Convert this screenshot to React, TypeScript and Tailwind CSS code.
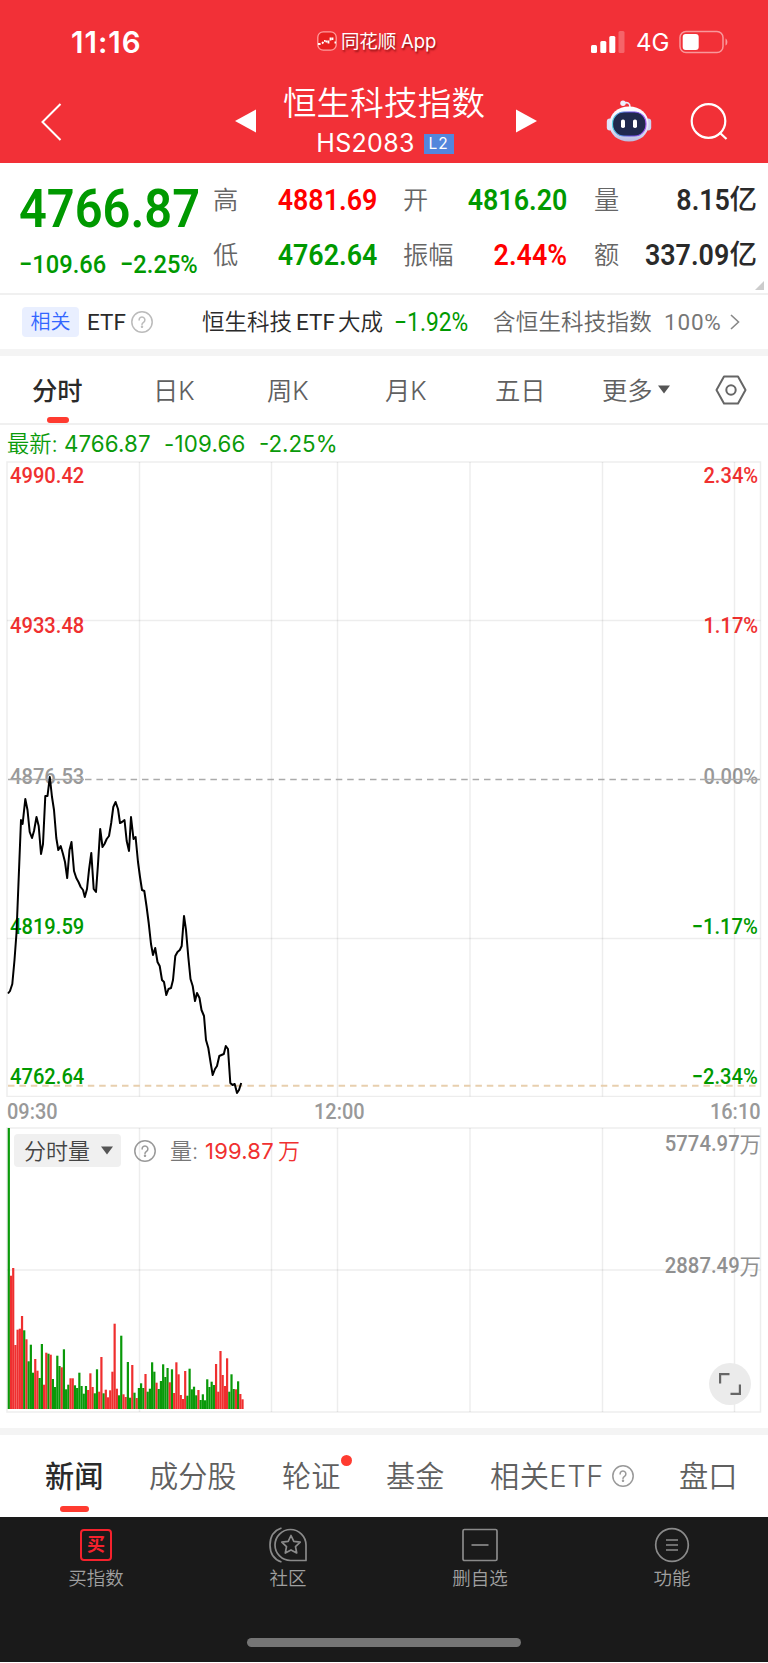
import React from "react";

const CN = "font-['Inter','Noto_Sans_CJK_SC',sans-serif]";
const NUM = "font-['Roboto','Noto_Sans_CJK_SC',sans-serif]";
const NARROW = "inline-block origin-left scale-x-[0.895] font-['Roboto','Noto_Sans_CJK_SC',sans-serif]";
const NARROW_R = "inline-block origin-right scale-x-[0.895] font-['Roboto','Noto_Sans_CJK_SC',sans-serif]";

const PRICE_POINTS =
  "8,993.5 10,991 12.3,984 14.5,960 16.5,933 21,820 22.6,824 25.3,799 27.5,810 29.7,832 32,838 34,831 36.5,817 38.7,826 41,854 43,844 45.3,796 47.5,796 49.8,777 52,797 54,810 56.3,838 58.3,850 60.7,846 63,854 65,862 67.2,878 69.5,850 71.5,842 74,871 76.3,878 78.5,882 80.7,887 83,890 84.8,897 87,889 89,870 91.3,853 93.7,889 96,892 98,864 100.2,829 102.5,847 104.5,844 106.7,839 109,836 111.2,823 113.3,807 115.6,802 118,809 120,823 122,822 124.5,820 126.7,841 129,851 131,817 133.5,839 135.6,837 138,862 140,877 142,890 144.3,891 146.5,906 148.7,923 151,944 153,955 155.2,948 157.5,962 159.7,966 162,980 164,982 166.3,995 168.5,989 171,988 173,980 175.3,956 177.5,952 179.8,950 181.7,946 184,916 186,930 188.3,957 190.5,979 192.7,986 195,1001 197,993 199.5,998 201.5,1010 204,1016 206,1040 208.3,1048 210.5,1062 212.7,1075 215,1069 217,1066 219.3,1056 221.5,1055 223.8,1054 225.8,1046 228,1049 230.3,1083 232.5,1085 234.7,1084 237,1093 239,1090 241.2,1083";

// Each entry is the bar's height, with a sign for its direction (positive: up, negative: down).
const VOLUME = [
  -281, 133.3, 141, 64, 79.3, 80.3, 93, -78.7, 69.7, -47.7, -64.3, -36.3, 50, 38.3, -31, -65, 24.3, 56.3, -55.3, 54.3, -30,
  -22, -53.3, -43, 41.7, -59.7, -19.7, -24.3, 30.7, 30.7, -23.7, -21, -36.3, -23, -15.3, -23, 19, 35.7, 22, -15.7, -39.7,
  17.3, 52, -15.7, 19.3, 11.7, 18.7, 37.3, 85.3, 20.3, -13.7, -73.3, 14.7, 12, -47, -11.3, 44, -16.3, 11, -21, -25.7, -21,
  35, -17.3, -20.3, -46.7, -37.3, 26.3, -20, -28, -44.7, -32, -41, 26.7, -39.7, 16, 46.7, 34.7, 14, 10, 38, -13.3, -40.3,
  -19.7, -22.3, -13.7, 19, -9, -14.7, -8.7, -29.7, -22, -27.3, -24, 45, 17.3, 58, 34, 23, 50.7, -17.3, -34.7, -20, 19.7,
  -27.7, 15, 9.7,
];

const GRID_X = [139.5, 271.5, 337.5, 470, 602.5, 734.5];

function HelpIcon({ className }: { className: string }) {
  return (
    <svg viewBox="0 0 22 22" className={className} fill="none" stroke="currentColor" strokeWidth="1.5">
      <circle cx="11" cy="11" r="10.2" />
      <path d="M8.1 8.9a2.9 2.9 0 1 1 4.5 2.4c-1 .7-1.6 1.1-1.6 2.2" strokeLinecap="round" />
      <circle cx="11" cy="15.8" r=".5" fill="currentColor" />
    </svg>
  );
}

function StatusBar() {
  return (
    <div className="flex h-[84px] items-center text-white">
      <div className="ml-[71px] w-[246px] pt-[2px] text-[29.5px] font-semibold leading-none tracking-[1px]">11:16</div>
      <svg viewBox="0 0 20 20" className="-mt-[3px] h-5 w-5 shrink-0" fill="none">
        <rect x=".8" y=".8" width="18.4" height="18.4" rx="5.5" fill="#e81f1f" stroke="#ff9d9d" strokeWidth="1.3" />
        <path d="M1 13h2.6M5 12.500l1.500-1.500M7 9.800h1.500M9.500 11.500v-2M11.500 12.500V9.500M13.500 9.500V6.500M15.500 9V6.500M17.500 11.500h1.500" stroke="#fff" strokeWidth="1.8" />
      </svg>
      <div className="-mt-[1px] ml-[4px] w-[250px] whitespace-nowrap text-[18.5px] leading-none tracking-[-0.15px] [text-shadow:1px_2px_2px_rgba(90,0,0,0.65)]">
        同花顺 App
      </div>
      <svg viewBox="0 0 34 22" className="h-[22px] w-[34px] shrink-0" fill="#fff">
        <rect x="0" y="14" width="6" height="8" rx="1.5" />
        <rect x="9.300" y="10" width="6" height="12" rx="1.500" />
        <rect x="18.300" y="5" width="6" height="17" rx="1.500" />
        <rect x="27.500" y="0" width="6" height="22" rx="1.500" opacity=".25" />
      </svg>
      <div className="ml-[11px] w-[43px] pt-[2px] text-[24px] leading-none">4G</div>
      <svg viewBox="0 0 50 24" className="h-6 w-[50px] shrink-0" fill="none">
        <rect x="1" y="1.500" width="43" height="21" rx="6" stroke="#fff" strokeOpacity=".5" strokeWidth="1.500" />
        <rect x="3.700" y="4" width="16" height="16" rx="3" fill="#fff" />
        <path d="M46.500 8.500c2.500 1 2.500 6 0 7z" fill="#fff" opacity=".5" />
      </svg>
    </div>
  );
}

function Robot() {
  return (
    <svg viewBox="0 0 46 42" className="h-[42px] w-[46px] shrink-0">
      <defs>
        <linearGradient id="shell" x1="0" y1="0" x2="0" y2="1">
          <stop offset="0" stopColor="#fff" />
          <stop offset=".6" stopColor="#e6e8fb" />
          <stop offset="1" stopColor="#b9bcdf" />
        </linearGradient>
        <linearGradient id="visor" x1="0" y1="0" x2="1" y2="0">
          <stop offset="0" stopColor="#5bd5e6" />
          <stop offset=".5" stopColor="#5a49e0" />
          <stop offset="1" stopColor="#a45cf0" />
        </linearGradient>
      </defs>
      <path d="M17 3c5-1 7 0 7 4" fill="none" stroke="#e9ebfb" strokeWidth="1.600" />
      <circle cx="17" cy="3.200" r="2.700" fill="#eef0fd" />
      <rect x="0.800" y="18.500" width="6" height="12" rx="3" fill="#dfe2f8" />
      <rect x="39.200" y="18.500" width="6" height="12" rx="3" fill="#cfd3f0" />
      <path d="M23 6.500C34 6.500 42.500 13 42.500 24S34 41.500 23 41.500 3.500 35 3.500 24 12 6.500 23 6.500z" fill="url(#shell)" />
      <rect x="6.500" y="12" width="33.500" height="24" rx="11.500" fill="#20294d" stroke="url(#visor)" strokeWidth="1.200" />
      <rect x="15" y="19.500" width="4" height="8.500" rx="1.800" fill="#fff" />
      <rect x="27" y="19.500" width="4" height="8.500" rx="1.800" fill="#fff" />
    </svg>
  );
}

function TitleBar() {
  return (
    <div className="flex h-[79px] text-white">
      <svg viewBox="0 0 22 38" className="ml-[41px] mt-[19px] h-[38px] w-[22px] shrink-0" fill="none" stroke="#fff" strokeWidth="2">
        <path d="M19.500 1 1.500 19l18 18" />
      </svg>
      <svg viewBox="0 0 21 24" className="ml-[172px] mt-[25px] h-6 w-[21px] shrink-0" fill="#fff">
        <path d="M0 12 21 .5v23z" />
      </svg>
      <div className="ml-[26px] flex w-[204px] shrink-0 flex-col items-center">
        <div className="whitespace-nowrap text-[33.5px] font-[350] leading-[38px] tracking-[0.2px]">恒生科技指数</div>
        <div className="mt-[8px] flex h-[27px] items-center pl-[2px]">
          <span className="text-[25px] leading-none tracking-[0.3px]">HS2083</span>
          <span className="ml-[9px] flex h-[20px] w-[30px] items-center justify-center bg-[#5386dc] text-[15.5px] leading-none tracking-[1px]">
            L2
          </span>
        </div>
      </div>
      <svg viewBox="0 0 21 24" className="ml-[30px] mt-[25px] h-6 w-[21px] shrink-0" fill="#fff">
        <path d="M21 12 0 .5v23z" />
      </svg>
      <div className="ml-[69px] mt-[16px]">
        <Robot />
      </div>
      <svg viewBox="0 0 38 38" className="ml-[38px] mt-[18px] h-[38px] w-[38px] shrink-0" fill="none" stroke="#fff" strokeWidth="2.200">
        <circle cx="18.500" cy="19" r="16.800" />
        <path d="m29.500 30.500 7 6.500" />
      </svg>
    </div>
  );
}

function Quote() {
  const label = "whitespace-nowrap pt-px text-[25.2px] font-[350] leading-none text-[#666]";
  const cell = "-mt-[2px] flex items-center justify-end whitespace-nowrap text-[30px] font-semibold leading-none";
  const unit = "text-[27.5px] font-medium leading-none";
  return (
    <div className="relative flex h-[130px]">
      <div className="ml-[19px] flex w-[194px] shrink-0 flex-col text-[#009900]">
        <div className="mt-[17px] h-[55px] w-[180px] whitespace-nowrap text-[54.5px] font-semibold leading-[55px]">
          <span className={NARROW}>4766.87</span>
        </div>
        <div className="mt-[14px] flex whitespace-nowrap text-[26.5px] font-medium leading-[28px]">
          <span className="w-[101px]">
            <span className={NARROW}>−109.66</span>
          </span>
          <span className="w-[80px]">
            <span className={NARROW}>−2.25%</span>
          </span>
        </div>
      </div>
      <div className="grid h-[110px] grid-cols-[60px_104px_26px_60px_104px_27px_35px_128px] grid-rows-[55px_55px] items-center pt-[10px]">
        <span className={label}>高</span>
        <span className={`${cell} text-[#f00]`}>
          <span className={NARROW_R}>4881.69</span>
        </span>
        <span />
        <span className={label}>开</span>
        <span className={`${cell} text-[#009900]`}>
          <span className={NARROW_R}>4816.20</span>
        </span>
        <span />
        <span className={label}>量</span>
        <span className={`${cell} text-[#2a2a2a]`}>
          <span className={NARROW_R}>8.15</span>
          <span className={unit}>亿</span>
        </span>
        <span className={label}>低</span>
        <span className={`${cell} text-[#009900]`}>
          <span className={NARROW_R}>4762.64</span>
        </span>
        <span />
        <span className={label}>振幅</span>
        <span className={`${cell} text-[#f00]`}>
          <span className={NARROW_R}>2.44%</span>
        </span>
        <span />
        <span className={label}>额</span>
        <span className={`${cell} text-[#2a2a2a]`}>
          <span className={NARROW_R}>337.09</span>
          <span className={unit}>亿</span>
        </span>
      </div>
      <svg viewBox="0 0 9 9" className="absolute bottom-[3px] right-1 h-[9px] w-[9px]" fill="#ccc">
        <path d="M9 0v9H0z" />
      </svg>
    </div>
  );
}

function EtfRow() {
  return (
    <div className="flex h-[56px] items-center whitespace-nowrap border-t-2 border-[#f0f0f0] text-[22.5px] leading-none text-[#2a2a2a]">
      <span className="ml-[22px] flex h-[30px] w-[57px] shrink-0 items-center justify-center rounded-[4px] bg-[#e9efff] text-[20px] font-[350] text-[#3366ff]">
        相关
      </span>
      <span className={`ml-[8px] w-[44px] ${NUM}`}>ETF</span>
      <HelpIcon className="h-[22px] w-[22px] shrink-0 text-[#bbb]" />
      <span className={`ml-[49px] flex w-[192px] items-center ${NUM}`}>
        <span className="w-[94px] font-[350]">恒生科技</span>
        <span className="w-[42px]">ETF</span>
        <span className="font-[350]">大成</span>
      </span>
      <span className="w-[99px] text-[25.5px] text-[#009900]">
        <span className={NARROW}>−1.92%</span>
      </span>
      <span className="w-[171px] font-[350] tracking-[0.2px] text-[#666]">含恒生科技指数</span>
      <span className={`w-[66px] tracking-[0.8px] text-[#777] ${NUM}`}>100%</span>
      <svg viewBox="0 0 10 16" className="h-4 w-[10px] shrink-0" fill="none" stroke="#888" strokeWidth="1.600">
        <path d="m1 1 7.500 7L1 15" />
      </svg>
    </div>
  );
}

function PeriodTabs() {
  return (
    <div className="flex h-[69px] items-center whitespace-nowrap border-b-2 border-[#f0f0f0] text-[25.3px] font-[350] leading-none text-[#606060]">
      <div className="relative ml-[32px] flex h-full w-[121px] items-center pt-[3px] font-medium text-[#2a2a2a]">
        分时
        <i className="absolute bottom-0 left-[15px] h-[6px] w-[22px] rounded-full bg-[#ff3b30]" />
      </div>
      <span className="w-[114px] pt-[3px]">日K</span>
      <span className="w-[118px] pt-[3px]">周K</span>
      <span className="w-[110px] pt-[3px]">月K</span>
      <span className="w-[107px] pt-[3px]">五日</span>
      <span className="w-[56px] pt-[3px]">更多</span>
      <svg viewBox="0 0 12 9" className="h-[9px] w-3 shrink-0" fill="#555">
        <path d="M0 .5h12L6 8.500z" />
      </svg>
      <svg viewBox="0 0 32 30" className="ml-[45px] h-[30px] w-8 shrink-0" fill="none" stroke="#666" strokeWidth="2">
        <path d="M9 1.500h14L30.500 15 23 28.500H9L1.500 15z" strokeLinejoin="round" />
        <circle cx="16" cy="15" r="4.700" />
      </svg>
    </div>
  );
}

function AxisLabels({ side }: { side: "left" | "right" }) {
  const rows =
    side === "left"
      ? ["4990.42", "4933.48", "4876.53", "4819.59", "4762.64"]
      : ["2.34%", "1.17%", "0.00%", "−1.17%", "−2.34%"];
  const tone = ["text-[#f03030]", "text-[#f03030]", "text-[#999]", "text-[#009900]", "text-[#009900]"];
  return (
    <div className={`flex flex-col justify-between ${side === "right" ? "items-end" : "items-start"}`}>
      {rows.map((r, i) => (
        <span
          key={r}
          className={`text-[22.5px] font-medium leading-[22px] ${side === "right" ? NARROW_R : NARROW} ${tone[i]}`}
        >
          {r}
        </span>
      ))}
    </div>
  );
}

function PriceChart() {
  return (
    <div className="relative h-[636px]">
      <div className="absolute inset-x-0 top-[3px] flex h-[623px] justify-between pl-[10px] pr-[10px]">
        <AxisLabels side="left" />
        <AxisLabels side="right" />
      </div>
      <svg viewBox="0 461 768 636" className="relative h-[636px] w-[768px]" fill="none">
        <g stroke="#000" strokeOpacity=".07" strokeWidth="1.500">
          <rect x="7" y="462" width="753.500" height="634.500" />
          {GRID_X.map((x) => (
            <path key={x} d={`M${x} 462v634.500`} />
          ))}
          <path d="M7 620.500h753.500M7 938.500h753.500" />
        </g>
        <path d="M85 779.500h615" stroke="#aaa" strokeWidth="1.700" strokeDasharray="6.500 4.900" />
        <path d="M8 779.500h76M700 779.500h60" stroke="#aaa" strokeWidth="1.300" />
        <path d="M8 1085.700h752" stroke="#e8cfae" strokeWidth="1.900" strokeDasharray="6.500 4.900" />
        <polyline points={PRICE_POINTS} stroke="#000" strokeWidth="2" strokeLinejoin="round" />
      </svg>
    </div>
  );
}

function VolumeChart() {
  return (
    <div className="relative h-[286px]">
      <svg viewBox="0 1127 768 286" className="h-[286px] w-[768px]" fill="none">
        <g stroke="#000" strokeOpacity=".07" strokeWidth="1.500">
          <rect x="7" y="1128" width="753.500" height="284" />
          {GRID_X.map((x) => (
            <path key={x} d={`M${x} 1128v284`} />
          ))}
          <path d="M7 1270h753.500" />
        </g>
        {VOLUME.map((v, i) => (
          <rect
            key={i}
            x={7.700 + i * 2.205}
            y={1409 - Math.abs(v)}
            width="2.205"
            height={Math.abs(v)}
            fill={v > 0 ? "#ef2f2f" : "#099909"}
          />
        ))}
      </svg>
      <div className="absolute left-[14px] top-[7px] flex h-[33px] items-center whitespace-nowrap text-[22px] leading-none">
        <span className="flex h-[33px] w-[107px] items-center rounded-[4px] bg-[#f0f0f0] pl-[10px] font-[350] text-[#444]">
          分时量
          <svg viewBox="0 0 12 9" className="ml-[11px] h-[9px] w-3" fill="#555">
            <path d="M0 .5h12L6 8.500z" />
          </svg>
        </span>
        <HelpIcon className="ml-[13px] h-[22px] w-[22px] text-[#999]" />
        <span className="ml-[14px] w-[35px] font-[350] text-[#777]">量:</span>
        <span className="w-[73px] tracking-[0.2px] text-[#f03030]">199.87</span>
        <span className="font-[350] text-[#f03030]">万</span>
      </div>
      <div className="absolute right-[7px] top-[6px] flex flex-col gap-[100px] text-[22.7px] leading-[22px] text-[#909090]">
        {["5774.97", "2887.49"].map((n) => (
          <div key={n} className="flex justify-end">
            <span className={`font-medium ${NARROW_R}`}>{n}</span>
            <span className="text-[21.5px]">万</span>
          </div>
        ))}
      </div>
      <div className="absolute bottom-[8px] right-[17px] flex h-[42px] w-[42px] items-center justify-center rounded-full bg-[#ebebeb]">
        <svg viewBox="0 0 22 22" className="h-[22px] w-[22px]" fill="none" stroke="#666" strokeWidth="2.200">
          <path d="M1.100 10.500V1.100h9.400M20.900 11.500v9.400h-9.400" />
        </svg>
      </div>
    </div>
  );
}

function NewsTabs() {
  return (
    <div className="flex h-[82px] items-center whitespace-nowrap text-[29.2px] font-[350] leading-none text-[#606060]">
      <div className="relative ml-[45px] flex h-full w-[104px] items-center pt-[2px] font-medium text-[#2a2a2a]">
        新闻
        <i className="absolute bottom-[5px] left-[15px] h-[6px] w-[29px] rounded-full bg-[#ff3b30]" />
      </div>
      <span className="w-[133px] pt-[2px]">成分股</span>
      <div className="relative flex h-full w-[104px] items-center pt-[2px]">
        轮证
        <i className="absolute left-[59px] top-[20px] h-[11px] w-[11px] rounded-full bg-[#ff3b30]" />
      </div>
      <span className="w-[104px] pt-[2px]">基金</span>
      <span className="w-[122px] pt-[2px] tracking-[0.5px]">相关ETF</span>
      <HelpIcon className="h-[22px] w-[22px] shrink-0 text-[#999]" />
      <span className="ml-[45px] pt-[2px]">盘口</span>
    </div>
  );
}

function BottomNav() {
  const icon = "h-9 w-[38px]";
  const items = [
    {
      label: "买指数",
      art: (
        <div className="flex h-8 w-8 items-center justify-center rounded-[4px] border-2 border-[#f5222d] text-[18px] font-bold leading-none text-[#f5222d]">
          买
        </div>
      ),
    },
    {
      label: "社区",
      art: (
        <svg viewBox="0 0 38 36" className={icon} fill="none" stroke="#8a8a8a" strokeWidth="1.700">
          <path d="M12.500 1C5 3.500 1 10 1 18s4 14.500 11.500 17" />
          <path d="M37 33.500H21.500A15.500 15.500 0 1 1 37 18z" strokeLinejoin="round" />
          <path
            d="m22 8.500 2.800 5.900 6.400.8-4.700 4.400 1.200 6.400-5.700-3.100-5.700 3.100 1.200-6.400-4.700-4.400 6.400-.8z"
            strokeLinejoin="round"
          />
        </svg>
      ),
    },
    {
      label: "删自选",
      art: (
        <svg viewBox="0 0 38 36" className={icon} fill="none" stroke="#8a8a8a" strokeWidth="1.700">
          <rect x="2" y="2.500" width="34" height="31" rx="1.500" />
          <path d="M10.500 18h17" />
        </svg>
      ),
    },
    {
      label: "功能",
      art: (
        <svg viewBox="0 0 38 36" className={icon} fill="none" stroke="#8a8a8a" strokeWidth="1.700">
          <circle cx="19" cy="18" r="16.300" />
          <path d="M13 13h12M13 18h12M13 23h12" />
        </svg>
      ),
    },
  ];
  return (
    <div className="h-[145px] bg-[#1a1a1a]">
      <div className="grid grid-cols-4 pt-[10px]">
        {items.map((it) => (
          <div key={it.label} className="flex flex-col items-center">
            <div className="flex h-9 items-center">{it.art}</div>
            <span className="mt-[5px] text-[18.5px] font-[350] leading-[20px] text-[#a0a0a0]">{it.label}</span>
          </div>
        ))}
      </div>
      <div className="mx-auto mt-[50px] h-[9px] w-[274px] rounded-full bg-[#757575]" />
    </div>
  );
}

export default function App() {
  return (
    <div className={`h-[1663px] w-[768px] overflow-hidden bg-white ${CN}`}>
      <header className="h-[163px] bg-[#f23037]">
        <StatusBar />
        <TitleBar />
      </header>
      <Quote />
      <EtfRow />
      <div className="h-[7px] bg-[#f4f4f4]" />
      <PeriodTabs />
      <div className="flex h-[36px] items-center whitespace-nowrap pl-[7px] pt-[2px] text-[22.3px] leading-none text-[#0a9a0a]">
        <span className="w-[57px] font-[350]">最新:</span>
        <span className="w-[100px] tracking-[0.1px]">4766.87</span>
        <span className="w-[95px] tracking-[0.2px]">-109.66</span>
        <span>-2.25%</span>
      </div>
      <PriceChart />
      <div className="flex h-[30px] items-center pb-px text-[22.3px] font-medium leading-none text-[#999]">
        <span className="ml-[7px] w-[307px]">
          <span className={NARROW}>09:30</span>
        </span>
        <span className={NARROW}>12:00</span>
        <span className={`ml-auto mr-[7px] ${NARROW_R}`}>16:10</span>
      </div>
      <VolumeChart />
      <div className="h-[15px]" />
      <div className="h-[7px] bg-[#f4f4f4]" />
      <NewsTabs />
      <BottomNav />
    </div>
  );
}
